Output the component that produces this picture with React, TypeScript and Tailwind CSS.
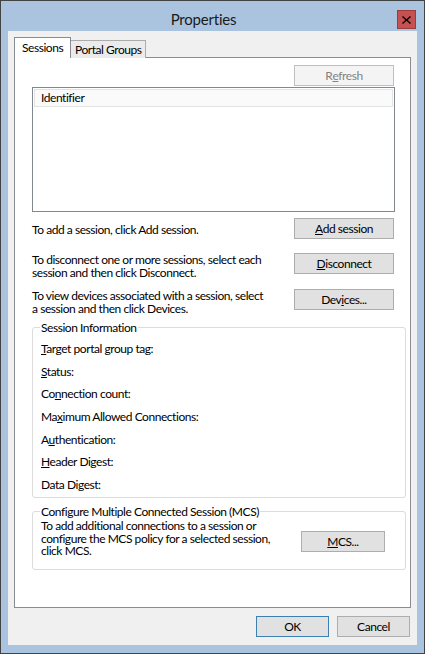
import React from 'react';

const font = "font-['Segoe_UI','Lato',sans-serif]";

const Btn = ({
  children,
  className = '',
  disabled = false,
  primary = false,
}: {
  children: React.ReactNode;
  className?: string;
  disabled?: boolean;
  primary?: boolean;
}) => (
  <button
    className={
      'h-[21px] shrink-0 flex items-center justify-center text-[12px] leading-none border whitespace-nowrap ' +
      (disabled
        ? 'bg-[#f4f4f4] border-[#bfbfbf] text-[#838383] '
        : primary
        ? 'bg-[#e1e1e1] border-[#3c7fb1] text-black '
        : 'bg-[#e1e1e1] border-[#adadad] text-black ') +
      className
    }
  >
    {children}
  </button>
);

const GroupBox = ({
  label,
  children,
  className = '',
}: {
  label: string;
  children: React.ReactNode;
  className?: string;
}) => (
  <fieldset
    className={
      'border border-[#dcdcdc] rounded-[3px] ml-[17px] mr-[4px] px-[8px] m-0 ' + className
    }
  >
    <legend className="px-[1px] -ml-[1px] text-[12px] leading-[13px] whitespace-nowrap">{label}</legend>
    {children}
  </fieldset>
);

const infoLabels: React.ReactNode[] = [
  <><u>T</u>arget portal group tag:</>,
  <><u>S</u>tatus:</>,
  <>Co<u>n</u>nection count:</>,
  <>Ma<u>x</u>imum Allowed Connections:</>,
  <>A<u>u</u>thentication:</>,
  <><u>H</u>eader Digest:</>,
  <>Data Di<u>g</u>est:</>,
];

export default function App() {
  return (
    <div
      className={`w-[425px] h-[654px] bg-[#aac4df] border border-[#434343] flex flex-col text-black ${font}`}
    >
      {/* title bar */}
      <div className="h-[30px] relative flex items-center justify-center pr-[18px] pt-[6px] shrink-0">
        <span className="text-[15px] leading-none text-[#1a1a1a] tracking-[-0.2px]">Properties</span>
        <div className="absolute right-[8px] top-[9px] w-[19px] h-[19px] bg-[#c75050] border border-[#9b3b3b] flex items-center justify-center">
          <svg width="9" height="8" viewBox="0 0 9 8">
            <path d="M1 0 L4.5 3.2 L8 0 L9 1 L5.6 4 L9 7 L8 8 L4.5 4.8 L1 8 L0 7 L3.4 4 L0 1 Z" fill="#000" />
          </svg>
        </div>
      </div>

      {/* client */}
      <div className="mx-[7px] mb-[8px] h-[614px] bg-[#f0f0f0] flex flex-col px-[6px] pt-[7px] text-[12px] whitespace-nowrap tracking-[-0.45px]">
        {/* tabs */}
        <div className="flex items-end h-[20px] relative z-10 -mb-px">
          <div className="w-[57px] h-[21px] bg-white border-t border-l border-r border-[#898c95] flex items-start pl-[7px] pt-[4px] leading-none">
            Sessions
          </div>
          <div className="w-[75px] h-[18px] bg-[#ebebeb] border-t border-r border-[#acacac] flex items-start pl-[4px] pt-[3px] leading-none">
            Portal Groups
          </div>
        </div>

        {/* panel */}
        <div className="h-[551px] bg-white border border-[#898c95] flex flex-col">
          <div className="flex justify-end mr-[16px] mt-[7px]">
            <Btn disabled className="w-[100px]">
              R<u>e</u>fresh
            </Btn>
          </div>

          <div className="ml-[17px] mr-[15px] mt-[1px] h-[125px] border border-[#828790] p-[1px]">
            <div className="h-[18px] bg-[#fafafa] border border-[#e3e3e3] flex items-center pl-[6px] leading-none">
              Identifier
            </div>
          </div>

          <div className="flex items-start justify-between ml-[17px] mr-[16px] mt-[6px] h-[21px]">
            <span className="leading-[13px] mt-[5px]">To add a session, click Add session.</span>
            <Btn className="w-[100px]">
              <u>A</u>dd session
            </Btn>
          </div>

          <div className="flex items-start justify-between ml-[17px] mr-[16px] mt-[14px] h-[26px]">
            <span className="leading-[12.5px] mt-[1px]">
              To disconnect one or more sessions, select each
              <br />
              session and then click Disconnect.
            </span>
            <Btn className="w-[100px]">
              <u>D</u>isconnect
            </Btn>
          </div>

          <div className="flex items-start justify-between ml-[17px] mr-[16px] mt-[10px] h-[26px]">
            <span className="leading-[12.5px] mt-[1px]">
              To view devices associated with a session, select
              <br />
              a session and then click Devices.
            </span>
            <Btn className="w-[100px]">
              Dev<u>i</u>ces...
            </Btn>
          </div>

          <GroupBox label="Session Information" className="mt-[6px] h-[177px]">
            <div className="flex flex-col gap-[9.7px] pt-[8px] leading-[13px]">
              {infoLabels.map((l, i) => (
                <div key={i}>{l}</div>
              ))}
            </div>
          </GroupBox>

          <GroupBox label="Configure Multiple Connected Session (MCS)" className="mt-[7px] h-[65px]">
            <div className="flex items-start justify-between pr-[12px]">
              <span className="leading-[12.5px] pt-[2px]">
                To add additional connections to a session or
                <br />
                configure the MCS policy for a selected session,
                <br />
                click MCS.
              </span>
              <Btn className="w-[84px] mt-[13px]">
                <u>M</u>CS...
              </Btn>
            </div>
          </GroupBox>
        </div>

        {/* bottom buttons */}
        <div className="flex justify-end gap-[8px] mt-[8px] mr-[1px]">
          <Btn primary className="w-[73px]">
            OK
          </Btn>
          <Btn className="w-[73px]">Cancel</Btn>
        </div>
      </div>
    </div>
  );
}
